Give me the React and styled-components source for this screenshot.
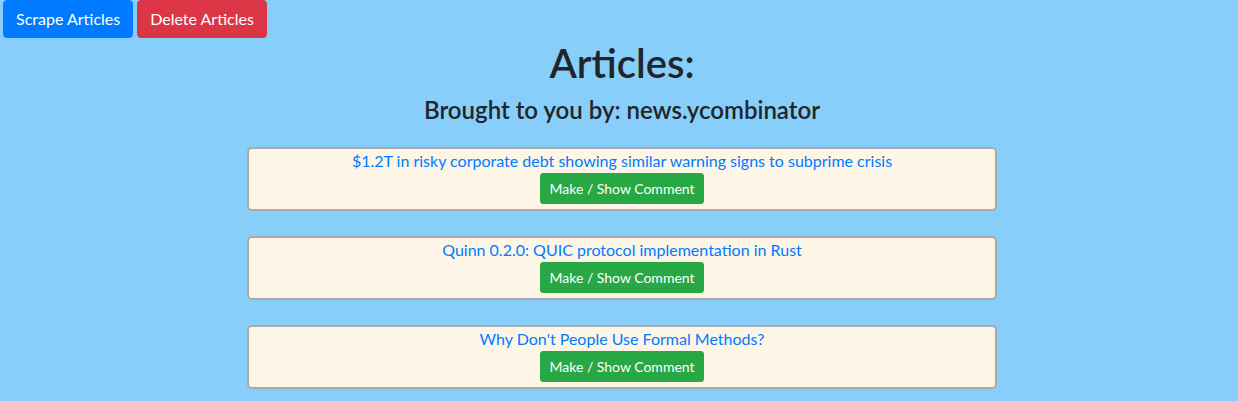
import React from "react";
import styled, { createGlobalStyle } from "styled-components";

const ARTICLES = [
  "$1.2T in risky corporate debt showing similar warning signs to subprime crisis",
  "Quinn 0.2.0: QUIC protocol implementation in Rust",
  "Why Don't People Use Formal Methods?",
];

const GlobalStyle = createGlobalStyle`
  body {
    margin: 0;
    background: #87cefa;
    font-family: "Segoe UI", Lato, "Noto Sans", sans-serif;
    color: #212529;
  }
`;

const Page = styled.div`
  min-height: 401px;
`;

const Toolbar = styled.div`
  display: flex;
  gap: 4px;
  padding-left: 3px;
`;

const Button = styled.button`
  font-family: inherit;
  font-size: ${(p) => (p.small ? "14px" : "16px")};
  line-height: 1.5;
  padding: ${(p) => (p.small ? "4px 8px" : "6px 12px")};
  border: 1px solid ${(p) => p.color};
  border-radius: ${(p) => (p.small ? "3px" : "4px")};
  background: ${(p) => p.color};
  color: #fff;
  cursor: pointer;
`;

const Header = styled.div`
  text-align: center;
  padding-left: 6px;
`;

const Title = styled.h1`
  font-size: 40px;
  font-weight: 600;
  line-height: 1.2;
  margin: 1px 0 9px;
`;

const Subtitle = styled.h4`
  font-size: 24px;
  font-weight: 600;
  line-height: 1.2;
  margin: 0 0 22px;
`;

const List = styled.div`
  display: flex;
  flex-direction: column;
  align-items: center;
  gap: 25px;
  padding-left: 6px;
`;

const Card = styled.div`
  box-sizing: border-box;
  width: 750px;
  height: 64px;
  border: 2px solid #aaa;
  border-radius: 5px;
  background: #fdf5e6;
  display: flex;
  flex-direction: column;
  align-items: center;
`;

const Link = styled.a`
  color: #007bff;
  font-size: 16px;
  line-height: 24px;
  text-decoration: none;
`;

export default function App() {
  return (
    <Page>
      <GlobalStyle />
      <Toolbar>
        <Button color="#007bff">Scrape Articles</Button>
        <Button color="#dc3545">Delete Articles</Button>
      </Toolbar>
      <Header>
        <Title>Articles:</Title>
        <Subtitle>Brought to you by: news.ycombinator</Subtitle>
      </Header>
      <List>
        {ARTICLES.map((title) => (
          <Card key={title}>
            <Link href="#">{title}</Link>
            <Button small color="#28a745">
              Make / Show Comment
            </Button>
          </Card>
        ))}
      </List>
    </Page>
  );
}
